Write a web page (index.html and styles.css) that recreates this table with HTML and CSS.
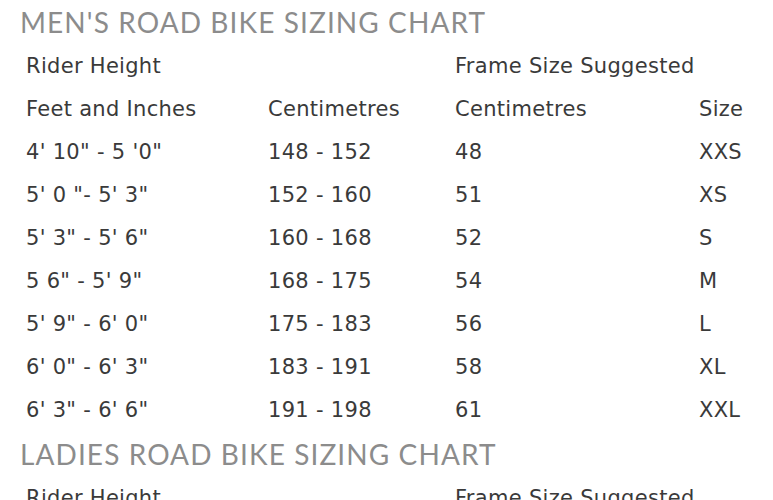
FILE: index.html
```html
<!DOCTYPE html>
<html>
<head>
<meta charset="utf-8">
<link rel="stylesheet" href="styles.css">
</head>
<body>
<div class="page">
  <h1 class="title">MEN'S ROAD BIKE SIZING CHART</h1>
  <div class="chart">
    <div>Rider Height</div><div></div><div>Frame Size Suggested</div><div></div>
    <div>Feet and Inches</div><div>Centimetres</div><div>Centimetres</div><div>Size</div>
    <div>4' 10" - 5 '0"</div><div>148 - 152</div><div>48</div><div>XXS</div>
    <div>5' 0 "- 5' 3"</div><div>152 - 160</div><div>51</div><div>XS</div>
    <div>5' 3" - 5' 6"</div><div>160 - 168</div><div>52</div><div>S</div>
    <div>5 6" - 5' 9"</div><div>168 - 175</div><div>54</div><div>M</div>
    <div>5' 9" - 6' 0"</div><div>175 - 183</div><div>56</div><div>L</div>
    <div>6' 0" - 6' 3"</div><div>183 - 191</div><div>58</div><div>XL</div>
    <div>6' 3" - 6' 6"</div><div>191 - 198</div><div>61</div><div>XXL</div>
  </div>
  <h1 class="title title-second">LADIES ROAD BIKE SIZING CHART</h1>
  <div class="chart">
    <div>Rider Height</div><div></div><div>Frame Size Suggested</div><div></div>
  </div>
</div>
</body>
</html>
```
FILE: styles.css
```css
html, body {
  margin: 0;
  padding: 0;
  background: #ffffff;
}
.page {
  width: 773px;
  height: 500px;
  overflow: hidden;
}
.title {
  margin: 0;
  padding-left: 20px;
  height: 44px;
  line-height: 44px;
  font-family: "Lato", sans-serif;
  font-weight: 400;
  font-size: 28px;
  letter-spacing: 1.1px;
  color: #8c8c8c;
  white-space: nowrap;
}
.title-second {
  margin-top: 1px;
}
.chart {
  display: grid;
  grid-template-columns: 242px 187px 244px 1fr;
  grid-auto-rows: 43px;
  align-items: center;
  padding-left: 26px;
  font-family: "DejaVu Sans", Verdana, sans-serif;
  font-size: 21px;
  letter-spacing: 0.3px;
  color: #3a3a3a;
  white-space: nowrap;
}
```
